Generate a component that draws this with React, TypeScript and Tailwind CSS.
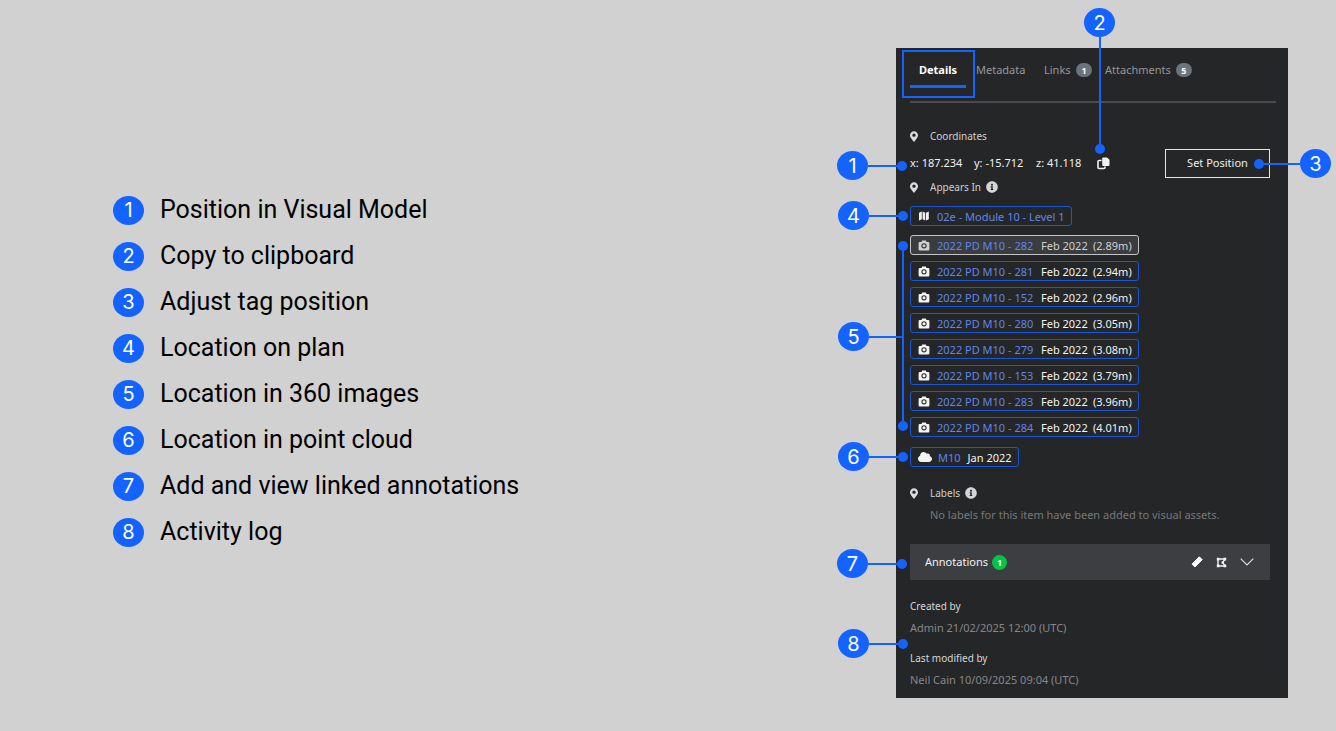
import React from 'react';
import { FaCloud, FaInfoCircle, FaMapMarkerAlt } from 'react-icons/fa';
import { clsx } from 'clsx';

const LEGEND = [
  'Position in Visual Model',
  'Copy to clipboard',
  'Adjust tag position',
  'Location on plan',
  'Location in 360 images',
  'Location in point cloud',
  'Add and view linked annotations',
  'Activity log',
];

const IMAGES = [
  { name: '2022 PD M10 - 282', date: 'Feb 2022', distance: '(2.89m)', active: true },
  { name: '2022 PD M10 - 281', date: 'Feb 2022', distance: '(2.94m)' },
  { name: '2022 PD M10 - 152', date: 'Feb 2022', distance: '(2.96m)' },
  { name: '2022 PD M10 - 280', date: 'Feb 2022', distance: '(3.05m)' },
  { name: '2022 PD M10 - 279', date: 'Feb 2022', distance: '(3.08m)' },
  { name: '2022 PD M10 - 153', date: 'Feb 2022', distance: '(3.79m)' },
  { name: '2022 PD M10 - 283', date: 'Feb 2022', distance: '(3.96m)' },
  { name: '2022 PD M10 - 284', date: 'Feb 2022', distance: '(4.01m)' },
];

function Pin({ n }: { n: number }) {
  return (
    <span className="flex h-[29px] w-[31px] shrink-0 items-center justify-center rounded-[50%] bg-[#1463ff] font-['Inter',sans-serif] text-[20px] leading-none text-white">
      {n}
    </span>
  );
}

function Dot() {
  return <span className="size-[10px] shrink-0 rounded-full bg-[#1463ff]" />;
}

// Numbered pin on the left with a leader line into the panel
function Callout({ n, className, dot = true }: { n: number; className: string; dot?: boolean }) {
  return (
    <div className={clsx('absolute flex items-center', className)}>
      <Pin n={n} />
      <span className="h-[2px] flex-1 bg-[#1463ff]" />
      {dot && <Dot />}
    </div>
  );
}

function CopyIcon() {
  return (
    <svg viewBox="0 0 13 13" className="h-[13px] w-[13px]" fill="none">
      <path d="M4.5 3.5H2a1 1 0 0 0-1 1V10.500a1 1 0 0 0 1 1h5a1 1 0 0 0 1-1V9.500" stroke="#f3f3f3" strokeWidth="1.600" />
      <path d="M6.200 0.500h3.800l2.500 2.300v5.200a1 1 0 0 1-1 1H6.200a1 1 0 0 1-1-1V1.500a1 1 0 0 1 1-1z" fill="#f3f3f3" />
    </svg>
  );
}

function MapIcon() {
  return (
    <svg viewBox="0 0 12 10" className="mr-[7px] h-[10px] w-3" fill="#f3f3f3">
      <path d="M1 1.800 3.800.6v7.700L1 9.500zM4.600.6l2.600 1.100v7.700L4.600 8.300zM8 1.700 10.800.5v7.700L8 9.400z" />
    </svg>
  );
}

function CameraIcon() {
  return (
    <svg viewBox="0 0 12 11" className="mr-[7px] h-[11px] w-3" fill="none">
      <path d="M1.800 2h1.700L4.200.5h3.600L8.500 2h1.700a1.200 1.200 0 0 1 1.200 1.200v6a1.200 1.200 0 0 1-1.200 1.200H1.800A1.200 1.200 0 0 1 .6 9.200v-6A1.200 1.200 0 0 1 1.800 2z" fill="currentColor" />
      <circle cx="6" cy="5.800" r="2.100" stroke="#303134" strokeWidth="1.100" />
    </svg>
  );
}

function RulerIcon() {
  return (
    <svg viewBox="0 0 12 12" className="size-[12px]">
      <path d="M8.300 0.800 11.200 3.700 3.900 11 1 8.100z" fill="#fff" stroke="#fff" strokeLinejoin="round" />
      <path d="M3.400 6.200l1 1M5.200 4.400l1 1M7 2.600l1 1" stroke="#b4b5b8" strokeWidth="0.700" />
    </svg>
  );
}

function PolygonIcon() {
  return (
    <svg viewBox="0 0 11 11" className="size-[11px]" fill="none">
      <path d="M2 2h7L6.800 5.500 9 9H2z" stroke="#f3f3f3" strokeWidth="1.400" />
      <path d="M.8.8h2.600v2.600H.8zM7.600.8h2.600v2.600H7.600zM.8 7.600h2.600v2.600H.8zM7.600 7.600h2.600v2.600H7.600zM5.600 4.300h2.200v2.400H5.600z" fill="#f3f3f3" />
    </svg>
  );
}

function Badge({ children, className }: { children: React.ReactNode; className: string }) {
  return (
    <span className={clsx('flex items-center justify-center rounded-full text-[9px] leading-none font-bold text-white', className)}>
      {children}
    </span>
  );
}

function SectionTitle({ title, info, className }: { title: string; info?: boolean; className?: string }) {
  return (
    <h3 className={clsx('flex h-[18px] items-center text-[10px] text-[#cfcfcf]', className)}>
      <FaMapMarkerAlt size={11} className="mr-3 w-2 text-[#dcdcdc]" />
      {title}
      {info && (
        <button aria-label={`About ${title}`} className="ml-[5px] text-[#d4d5d7]">
          <FaInfoCircle size={12} />
        </button>
      )}
    </h3>
  );
}

const chip = 'flex h-5 items-center rounded-[3px] border pr-[6px] pl-[7px] text-[11px] leading-none whitespace-nowrap';

function DetailsPanel() {
  return (
    <section className="bg-[#252628] pb-[9px] pl-[14px] font-['Noto_Sans',sans-serif] text-[11px]">
      <nav className="mr-3 flex h-[55px] items-start border-b-2 border-[#4a4b4e] text-[#96979a]">
        <button className="flex w-14 flex-col items-center border-b-[3px] border-[#1463ff] pt-3 pb-[5px] leading-5 font-bold text-white">
          Details
        </button>
        <button className="ml-[10px] w-[68px] pt-3 text-left leading-5">Metadata</button>
        <button className="flex w-[61px] items-center pt-3 leading-5">
          <span className="w-8 text-left">Links</span>
          <Badge className="h-[14px] w-4 bg-[#6b737c]">1</Badge>
        </button>
        <button className="flex items-center gap-[5px] pt-3 leading-5">
          Attachments
          <Badge className="h-[14px] w-4 bg-[#6b737c]">5</Badge>
        </button>
      </nav>

      <div className="mr-[18px]">
        <SectionTitle title="Coordinates" className="mt-6" />
        <div className="mt-1 flex h-[29px] items-center text-[#f0f0f0]">
          <span className="w-16">x: 187.234</span>
          <span className="w-[62px]">y: -15.712</span>
          <span className="w-[61px]">z: 41.118</span>
          <button aria-label="Copy coordinates"><CopyIcon /></button>
          <button className="ml-auto h-full w-[105px] border border-[#e4e4e4] text-center">Set Position</button>
        </div>

        <SectionTitle title="Appears In" info />
        <div className="mt-[10px] flex">
          <a href="#plan" className={clsx(chip, 'border-[#1a56d6] text-[#5f86ea]')}>
            <MapIcon />
            02e - Module 10 - Level 1
          </a>
        </div>

        <ul className="mt-[9px] flex flex-col items-start gap-[6px]">
          {IMAGES.map(img => (
            <li key={img.name}>
              <a
                href="#image"
                className={clsx(chip, img.active ? 'border-[#c4c4c4] bg-[#3a3c3f] text-[#d0d0d0]' : 'border-[#1a56d6] text-[#f3f3f3]')}
              >
                <CameraIcon />
                <span className="w-[104px] text-[#5f86ea]">{img.name}</span>
                <span className="w-[52px]">{img.date}</span>
                <span>{img.distance}</span>
              </a>
            </li>
          ))}
        </ul>

        <div className="mt-[10px] flex">
          <a href="#cloud" className={clsx(chip, 'border-[#1a56d6] text-[#f3f3f3]')}>
            <FaCloud size={14} className="mr-[6px] w-[14px]" />
            <span className="mr-[7px] text-[#5f86ea]">M10</span>
            Jan 2022
          </a>
        </div>

        <SectionTitle title="Labels" info className="mt-[17px]" />
        <p className="mt-1 pl-5 leading-[18px] text-[#77787b]">No labels for this item have been added to visual assets.</p>

        <div className="mt-5 flex h-9 items-center bg-[#3d3e42] pr-4 pl-[15px] text-[#f3f3f3]">
          <span>Annotations</span>
          <Badge className="ml-1 size-[15px] bg-[#00c445]">1</Badge>
          <button aria-label="Measure" className="ml-auto"><RulerIcon /></button>
          <button aria-label="Draw area" className="ml-[13px]"><PolygonIcon /></button>
          <button aria-label="Expand annotations" className="ml-[13px]">
            <svg viewBox="0 0 14 8" className="h-2 w-[14px]" fill="none" stroke="#dcdcdc" strokeWidth="1.200">
              <path d="M.7.7 7 7 13.300.7" />
            </svg>
          </button>
        </div>

        <dl className="mt-[17px] leading-[18px]">
          <dt className="text-[10px] text-[#d6d6d6]">Created by</dt>
          <dd className="mt-1 text-[#85868a]">Admin 21/02/2025 12:00 (UTC)</dd>
          <dt className="mt-3 text-[10px] text-[#d6d6d6]">Last modified by</dt>
          <dd className="mt-1 text-[#85868a]">Neil Cain 10/09/2025 09:04 (UTC)</dd>
        </dl>
      </div>
    </section>
  );
}

export default function App() {
  return (
    <main className="flex min-h-screen items-start justify-between bg-[#d1d1d1] pr-12 pl-[113px]">
      <ol className="mt-[187px]">
        {LEGEND.map((label, i) => (
          <li key={label} className="flex h-[46px] items-center gap-4 font-['Roboto',sans-serif] text-[25px] text-black">
            <Pin n={i + 1} />
            {label}
          </li>
        ))}
      </ol>

      <div className="relative mt-12 w-[392px] shrink-0">
        <DetailsPanel />

        <div className="absolute top-[2px] left-[6px] h-12 w-[73px] border-2 border-[#1463ff]" />
        <Callout n={1} className="top-[103px] -left-[59px] w-[70px]" />
        <Callout n={4} className="top-[153px] -left-[58px] w-[70px]" />
        <Callout n={5} className="top-[274px] -left-[58px] w-[65px]" dot={false} />
        <Callout n={6} className="top-[394px] -left-[58px] w-[70px]" />
        <Callout n={7} className="top-[501px] -left-[59px] w-[70px]" />
        <Callout n={8} className="top-[581px] -left-[58px] w-[70px]" />

        <div className="absolute top-[193px] left-[2px] flex h-[190px] flex-col items-center">
          <Dot />
          <span className="w-[2px] flex-1 bg-[#1463ff]" />
          <Dot />
        </div>
        <div className="absolute -top-10 left-[188px] flex h-[146px] flex-col items-center">
          <Pin n={2} />
          <span className="w-[2px] flex-1 bg-[#1463ff]" />
          <Dot />
        </div>
        <div className="absolute top-[101px] left-[358px] flex w-[77px] items-center">
          <Dot />
          <span className="h-[2px] flex-1 bg-[#1463ff]" />
          <Pin n={3} />
        </div>
      </div>
    </main>
  );
}
